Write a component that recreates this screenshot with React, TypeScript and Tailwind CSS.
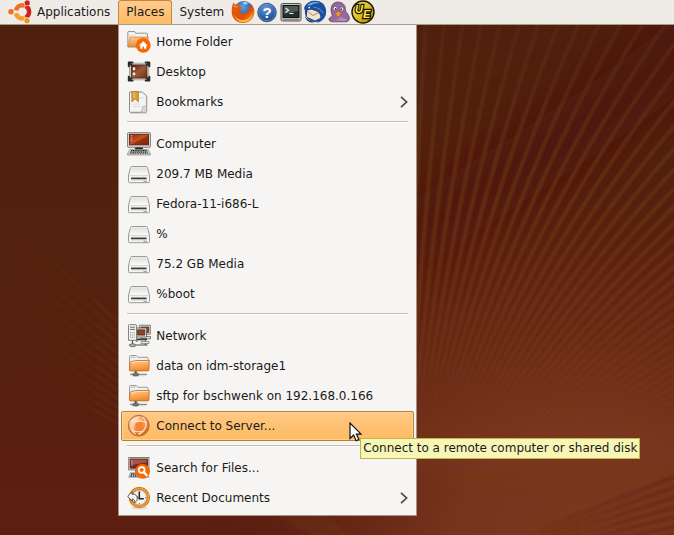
import type { ReactNode } from "react";
import clsx from "clsx";

type Entry = {
  label: string;
  icon: () => ReactNode;
  submenu?: boolean;
  active?: boolean;
  tip?: string;
};

function Defs() {
  return (
    <svg className="absolute h-0 w-0" aria-hidden="true">
      <defs>
        <linearGradient id="folder" x1="0" y1="0" x2="0.3" y2="1">
          <stop offset="0" stopColor="#fdd5a4" />
          <stop offset="0.5" stopColor="#fbab5d" />
          <stop offset="1" stopColor="#f08b2c" />
        </linearGradient>
        <linearGradient id="screen" x1="0" y1="0" x2="1" y2="1">
          <stop offset="0" stopColor="#8a2c0c" />
          <stop offset="0.5" stopColor="#c8542a" />
          <stop offset="0.55" stopColor="#9c3410" />
          <stop offset="1" stopColor="#7a2408" />
        </linearGradient>
        <linearGradient id="desk" x1="0" y1="0" x2="1" y2="1">
          <stop offset="0" stopColor="#4b1d0b" />
          <stop offset="0.5" stopColor="#9a5a38" />
          <stop offset="1" stopColor="#6d2d12" />
        </linearGradient>
        <linearGradient id="drive" x1="0" y1="0" x2="0" y2="1">
          <stop offset="0" stopColor="#e0e0de" />
          <stop offset="1" stopColor="#fbfbfb" />
        </linearGradient>
        <radialGradient id="globe" cx="0.4" cy="0.3" r="0.75">
          <stop offset="0" stopColor="#ffd9ae" />
          <stop offset="0.5" stopColor="#f69043" />
          <stop offset="1" stopColor="#dd5a10" />
        </radialGradient>
        <radialGradient id="blueBall" cx="0.45" cy="0.3" r="0.75">
          <stop offset="0" stopColor="#6a9fdb" />
          <stop offset="0.6" stopColor="#2d62a5" />
          <stop offset="1" stopColor="#123c7c" />
        </radialGradient>
        <linearGradient id="fox" x1="0" y1="0" x2="1" y2="1">
          <stop offset="0" stopColor="#e8600c" />
          <stop offset="0.6" stopColor="#e04e0a" />
          <stop offset="1" stopColor="#fbb526" />
        </linearGradient>
        <linearGradient id="gold" x1="0" y1="0" x2="1" y2="1">
          <stop offset="0" stopColor="#fff27a" />
          <stop offset="0.5" stopColor="#e2bb1c" />
          <stop offset="1" stopColor="#a37b05" />
        </linearGradient>
      </defs>
    </svg>
  );
}

function Icon({ children }: { children: ReactNode }) {
  return (
    <svg className="size-6 shrink-0" viewBox="0 0 24 24" fill="none" aria-hidden="true">
      {children}
    </svg>
  );
}

const UbuntuIcon = () => (
  <svg className="h-6 w-[25px] shrink-0" viewBox="0 0 25 24" fill="none" aria-hidden="true">
    <g strokeWidth="4.4">
      <path d="M8 10.400A6.600 6.600 0 0 1 17.200 5.800" stroke="#f0702a" />
      <path d="M17.700 6A6.600 6.600 0 0 1 17.700 17.600" stroke="#cf2118" />
      <path d="M17.200 17.900A6.600 6.600 0 0 1 8 13.200" stroke="#f5a01e" />
    </g>
    <circle cx="3" cy="11.800" r="2.700" fill="#f0701f" />
    <circle cx="19.200" cy="3" r="3.300" fill="#efebe7" />
    <circle cx="19.200" cy="2.900" r="2.600" fill="#d02318" />
    <circle cx="19" cy="20.600" r="3.300" fill="#efebe7" />
    <circle cx="19" cy="20.700" r="2.600" fill="#f0921a" />
  </svg>
);

const FirefoxIcon = () => (
  <Icon>
    <circle cx="12.600" cy="11" r="10" fill="url(#blueBall)" />
    <path d="M12 2.400c2-.8 4-.3 5 .8-1 1.600-3.400 1.400-5 .6Z" fill="#9cd0f5" />
    <path d="M1.600 4.400c.3-.8.8-1.400 1.200-1.800.2 1 .7 1.700 1.400 2.200C5.600 3.800 7.400 3.400 9 3.800 7.700 4.600 7.300 5.600 7.500 6.600c1.300.2 2.500.4 3.700.8-.4 1.300-1.600 1.800-2.800 2.300.4.9.2 1.700-.1 2.300 1.800 1.900 4.800 2 7 .6 2.300-1.200 3.600-3.600 2.800-6.400 1 .7 1.600 1.600 1.900 2.600.2-2.300-.4-4-1.400-5.800 3.400 2.200 5 5.400 4.800 9.200-.4 6.200-5 10.800-11.200 10.800C5.600 23 .9 18.200.7 12.200c0-2.800.1-5.400.9-7.800Z" fill="url(#fox)" />
    <path d="M3 14c1.400 4.200 5 6.400 9.200 6.200 4.800-.2 8.300-3.400 9.200-8-.2 5.800-4.200 9.800-9.400 9.800-4.600 0-8-3.200-9-8Z" fill="#fdc53a" />
    <path d="M2.600 6c1 1 2.600.8 4.200.6" stroke="#fbb03a" strokeWidth="1" />
  </Icon>
);

const HelpIcon = () => (
  <Icon>
    <circle cx="12" cy="12.500" r="9.300" fill="url(#blueBall)" stroke="#1d4a86" strokeWidth=".8" />
    <circle cx="12" cy="12.500" r="8.200" stroke="#6f9bd0" strokeWidth=".7" />
    <text x="12" y="18" textAnchor="middle" fill="#fff" fontSize="15" fontWeight="700" fontFamily="Liberation Sans, sans-serif">?</text>
  </Icon>
);

const TerminalIcon = () => (
  <Icon>
    <rect x="2" y="3.500" width="20" height="17.500" rx="1.500" fill="#c3c4be" stroke="#55574f" />
    <rect x="4" y="5.500" width="16" height="12" fill="#24302e" stroke="#111" />
    <path d="M5 6h14v5L5 14Z" fill="#4d5a57" />
    <path d="m6.500 8 3 2.200-3 2.200M10.500 13.500h4" stroke="#f2f5f0" strokeWidth="1.200" />
    <path d="M4 19.300h16" stroke="#7b7d77" />
  </Icon>
);

const ThunderbirdIcon = () => (
  <Icon>
    <circle cx="12.500" cy="11.500" r="10.600" fill="#1c4286" />
    <path d="M4 10.500c3-1.200 6-.9 9.500 1l3.500-.5 1.500 6.500-6.500 3L4 17Z" fill="#f1e4cf" />
    <path d="m4 11 6 4.500 6.500-3.500" stroke="#a98b62" strokeWidth="1" />
    <path d="M1.200 7.500C4 1.800 9 .2 14.200 1c6 1 9 5.600 8.800 11.200-.3 5.600-4.400 10-9.800 10.600 4-2.300 5-5.600 3.400-8.600C15 11.300 11.500 9 7.500 8.800c-2.200 0-4.400.2-6.300 1.200Z" fill="#1f4f9b" />
    <path d="M4 5.500C7.500 1.500 13 1.200 17 3.500c-4-.4-7 .1-9.500 2.100Z" fill="#6aa9e8" />
    <path d="M10 7c4 0 8.500 2.500 10 6" stroke="#4d86cc" strokeWidth="1.200" />
    <path d="M2 15.500C4 20 8 22 13 21.600c-4.500 2.400-10.500.2-11-6.100Z" fill="#16386f" />
    <circle cx="6.200" cy="7.600" r=".9" fill="#fff" />
  </Icon>
);

const PidginIcon = () => (
  <Icon>
    <path d="M4.500 13C2.800 6.500 6 2 10.800 2c5 0 7.800 3.500 7.600 7.600 0 3 3.600 4.300 4 8.400.2 2-1.400 3.800-3.400 3.800H5.500c-2.200 0-3.700-1.300-3.500-2.800.2-1.600 1.800-2 3.400-2.600 0-1-.5-2-.9-3.400Z" fill="#96699d" stroke="#66406f" strokeWidth=".8" />
    <path d="M7 20.500c3-.5 5.500-2 7-4 1.500 2 4 2.800 6.500 2.400-.6 1.600-2 2-3.600 2Z" fill="#b58bbb" />
    <circle cx="8.300" cy="8.600" r="2.100" fill="#fff" stroke="#5c3566" strokeWidth=".6" />
    <circle cx="14.700" cy="9" r="2.100" fill="#fff" stroke="#5c3566" strokeWidth=".6" />
    <circle cx="8.700" cy="8.900" r=".9" fill="#222" />
    <circle cx="14.300" cy="9.200" r=".9" fill="#222" />
    <path d="M8.800 12.500c1.300-1 3.800-.9 5.200.3-.6 1.600-1.500 3.400-3 4.400-1.400-1-2.200-3-2.200-4.700Z" fill="#f29c38" stroke="#b35e0b" strokeWidth=".6" />
  </Icon>
);

const UltraEditIcon = () => (
  <Icon>
    <circle cx="12" cy="12" r="11" fill="url(#gold)" stroke="#1b1904" strokeWidth="1.400" />
    <text x="4" y="13" fill="#ffe645" stroke="#141204" strokeWidth="2.400" paintOrder="stroke" fontSize="11" fontWeight="700" fontStyle="italic" fontFamily="Liberation Sans, sans-serif">
      U<tspan dy="5">E</tspan>
    </text>
  </Icon>
);

const HomeIcon = () => (
  <Icon>
    <path d="M.8 17V2.300c0-.5.300-.8.800-.8h6l1.200 1.700h10.800c.6 0 .9.400.9.900V17Z" fill="#e9e8e4" stroke="#8d8f8a" strokeWidth=".9" />
    <path d="M2.500 3.500h4.500M9 5h10" stroke="#fff" />
    <path d="M3 7.200h18.300L20 16.600H1.200Z" fill="url(#folder)" stroke="#c67a34" strokeWidth=".7" />
    <circle cx="16.300" cy="15.300" r="7.400" fill="#f66a06" />
    <path d="m16.300 11.200-4.300 4.200h1.300v3.400h2.200v-2.200h1.600v2.200h2.200v-3.400h1.300Z" fill="#fff" />
  </Icon>
);

const DesktopIcon = () => (
  <Icon>
    <rect x="2.500" y="3.200" width="19.200" height="16.600" fill="#eeeeec" stroke="#a5a59f" />
    <rect x="4.200" y="4.900" width="15.800" height="13.200" fill="url(#desk)" stroke="#4a2312" strokeWidth=".8" />
    <path d="M5.800 7.300h2.400v3H5.800ZM5.800 12.500h2.400v2.800H5.800Z" fill="#f4ece6" />
    <path d="M1.800 6.200V2.500h3.700M18.700 2.500h3.600v3.700M1.800 16.800v3.700h3.700M18.700 20.500h3.600v-3.700" stroke="#262826" strokeWidth="2" strokeLinejoin="round" strokeLinecap="round" />
    <path d="m2 2.700 2.800 2.800M22.200 2.700l-2.800 2.800M2 20.300l2.800-2.800M22.200 20.300l-2.800-2.800" stroke="#262826" strokeWidth="1.800" />
  </Icon>
);

const BookmarkIcon = () => (
  <Icon>
    <path d="M3.500 23h16" stroke="#cfcfcb" strokeWidth="1.500" />
    <path d="M2.700 2h12.500l4.500 4v15.500c0 .5-.3.800-.8.800H3.300c-.5 0-.8-.3-.8-.8V2.600Z" fill="#f3f3f1" stroke="#8b8d88" />
    <path d="M19.500 16.500c-1.500-.7-3-.5-4.200.2.300 2-.3 4-1.600 5.500h5.800Z" fill="#d8d9d5" stroke="#a9aaa6" strokeWidth=".7" />
    <path d="M11.500 8h6M6 14h7M6 16.500h7" stroke="#dcdcd9" />
    <path d="M4.900 1.600h6.400v10.200L8.100 8.700l-3.200 3.100Z" fill="#d9a13a" stroke="#a87416" strokeWidth=".8" />
    <path d="M7 2v6" stroke="#f0cd85" strokeWidth="1" />
  </Icon>
);

const ComputerIcon = () => (
  <Icon>
    <rect x=".6" y=".7" width="22.800" height="14.600" rx=".8" fill="#ddddd8" stroke="#6c6e69" strokeWidth=".9" />
    <rect x="2.400" y="2.300" width="19.200" height="10.600" fill="url(#screen)" stroke="#5c1a07" strokeWidth=".8" />
    <path d="M3.700 3.800h1.500M3.700 6h1.500M3.700 8.200h1.500" stroke="#eac9b8" strokeWidth="1.100" />
    <path d="M8.500 15.500h7l1 2.200h-9Z" fill="#1e1f1c" />
    <path d="M2.800 17.500h18.400l2.300 4.500v1H.5v-1Z" fill="#d4d5d0" stroke="#888a85" strokeWidth=".7" />
    <path d="M4 18.700h16" stroke="#30322f" strokeWidth="1.200" strokeDasharray="1.300 .4" />
    <path d="M3.300 20.200h17.500" stroke="#30322f" strokeWidth="1.200" strokeDasharray="1.600 .5" />
    <path d="M2.600 21.600h18.800" stroke="#555753" strokeWidth=".9" strokeDasharray="1.800 .7" />
  </Icon>
);

const DriveIcon = () => (
  <Icon>
    <path d="M4.700 4.500h14.600c.6 0 .9.300 1.100.8l2.100 7.900v6.600c0 .6-.4.900-.9.900H2.400c-.6 0-.9-.4-.9-.9v-6.600l2.100-7.900c.2-.5.500-.8 1.100-.8Z" fill="#f5f5f4" stroke="#999b96" />
    <path d="M4.900 5.600h14.200l2 7.600H2.900Z" fill="url(#drive)" />
    <path d="M2.200 13.700h19.600" stroke="#d2d3d0" />
    <path d="M4 16.400h15.600" stroke="#3a3c39" strokeWidth="1.700" />
    <path d="M4 17.800h15.600" stroke="#bdbeba" />
    <path d="M16.500 19.300h3.500" stroke="#9a9c97" strokeWidth="1" />
  </Icon>
);

const NetworkIcon = () => (
  <Icon>
    <path d="M12.300 1.200h11v9h-11Z" fill="#deded9" stroke="#70726d" strokeWidth=".9" />
    <path d="M14 3h7.700v5.500H14Z" fill="#8c4526" stroke="#4d210f" strokeWidth=".7" />
    <path d="M14 12.500h9.500v2.300H14Z" fill="#deded9" stroke="#555753" strokeWidth=".7" />
    <path d="M8.800 4h10.700v9H8.800Z" fill="#e6e6e2" stroke="#62645f" strokeWidth=".9" />
    <path d="M10.400 5.800h7.400v5.300h-7.400Z" fill="#8c4526" stroke="#4d210f" strokeWidth=".7" />
    <path d="M8 14.500h12v1.800H8Z" fill="#333" />
    <path d="M1.500 1.500c0-.5.300-.9.900-.9h6.200c.5 0 .9.400.9.900v14.800h-8Z" fill="#f1f1ee" stroke="#747671" strokeWidth=".9" />
    <path d="M3 3.200h5M3 5.400h5" stroke="#5c5e59" strokeWidth=".9" />
    <path d="M3 8.800h5M3 11h5M3 13.200h5" stroke="#8c8e88" strokeWidth="1" strokeDasharray="1 .8" />
    <path d="M8.800 17h2" stroke="#53a51b" strokeWidth="1.600" />
    <path d="M5.500 16.500v4M2 21h18.500M18.500 20.500v-4" stroke="#4b4d49" strokeWidth="1.200" />
    <path d="M14 17.500h8v2h-8Z" fill="#e9e9e6" stroke="#777974" strokeWidth=".7" />
    <ellipse cx="5.700" cy="21.300" rx="3.300" ry="1.500" fill="#a9aba6" stroke="#5b5d58" strokeWidth=".7" />
  </Icon>
);

const RemoteFolderIcon = () => (
  <Icon>
    <path d="M2.600 15V2.300c0-.5.300-.8.800-.8h6l1.400 1.800h9.400c.5 0 .9.300.9.800V15Z" fill="#f1f0ed" stroke="#91938e" strokeWidth=".9" />
    <path d="M4 3.200h4.500" stroke="#a9aba6" strokeWidth=".9" />
    <path d="M4.500 7.500 9 6.500h13.300l-.4 9.600c0 .5-.4.800-.9.800H3.200c-.5 0-.8-.3-.8-.8l.5-7.800Z" fill="url(#folder)" stroke="#b9692a" strokeWidth=".8" />
    <path d="M4.300 8.800 9.300 7.500h11.900" stroke="#ffe2bd" strokeWidth=".8" />
    <path d="M8.700 17v2.300" stroke="#555753" strokeWidth="2" />
    <path d="M3 20.400h17" stroke="#8b8d88" strokeWidth="1.200" />
    <path d="M4 21.800h15" stroke="#d0d0cc" strokeWidth=".9" />
    <ellipse cx="8.700" cy="20.500" rx="3.100" ry="1.600" fill="#73756f" stroke="#4a4c48" strokeWidth=".6" />
  </Icon>
);

const ConnectIcon = () => (
  <Icon>
    <circle cx="11.800" cy="11.700" r="10.400" fill="url(#globe)" stroke="#a8714a" />
    <path d="M2.500 8C5 4 9 2.200 13.500 2.600 11 5 8 7.500 7 10.500 6 14 7.500 18 9.500 20.800 5 20 1.500 14 2.500 8Z" fill="#fce0c4" opacity=".75" />
    <path d="M8.500 9.500c2-1.400 5-1.800 8-1l-1.200 5.300-4.300 3c-1.700-2-2.700-4.600-2.500-7.300Z" fill="#f58434" />
    <path d="M15.500 3c2.500 2 3.800 5.500 3.300 9.500-1.200 3.500-4 6.300-7.300 8" stroke="#fbd6b2" strokeWidth="1.600" />
    <path d="M3.500 7c4.500-.5 10-.5 16.500 1.500M4 15.500c3 2.200 7 2.700 11.500 2" stroke="#fdebd8" strokeWidth="1" />
  </Icon>
);

const SearchIcon = () => (
  <Icon>
    <rect x="1.700" y="1.500" width="20.300" height="12.400" fill="#dcdcd7" stroke="#73756f" strokeWidth=".9" />
    <path d="M3.200 3h17.300v9.200H3.200Z" fill="#7c2c22" stroke="#471711" strokeWidth=".8" />
    <path d="M3.800 3.600h16v2.900l-16 2.600Z" fill="#a6544a" />
    <path d="M4.500 5h1.200M4.500 7h1.200M4.500 9h1.200" stroke="#e3bfb7" />
    <path d="M8 14.300h6v2H8Z" fill="#2b2c29" />
    <path d="M3.500 16.800H20l2.200 4.400H1.700Z" fill="#d0d1cc" stroke="#888a85" strokeWidth=".7" />
    <path d="M4 18h8M3.500 20h9" stroke="#343633" strokeWidth="1.300" strokeDasharray="1.500 .7" />
    <circle cx="15.600" cy="15.300" r="7.400" fill="#f66a06" />
    <circle cx="14.700" cy="14" r="2.900" stroke="#fff" strokeWidth="1.700" />
    <path d="m16.800 16.200 2.900 3" stroke="#fff" strokeWidth="2.300" strokeLinecap="round" />
  </Icon>
);

const RecentIcon = () => (
  <Icon>
    <ellipse cx="12.500" cy="22" rx="8" ry="1.300" fill="#d9d8d5" />
    <circle cx="12.400" cy="11.500" r="9" fill="#f2f2f0" stroke="#b5640b" strokeWidth="3.200" />
    <circle cx="12.400" cy="11.500" r="9" stroke="#f2982c" strokeWidth="2.200" />
    <circle cx="12.400" cy="11.500" r="7.200" stroke="#a8aaa5" strokeWidth=".7" />
    <path d="M12.300 5.500v7.200h4.500" stroke="#242624" strokeWidth="1.500" />
    <path d="M12.300 12.700 9.500 10M12.400 17.200v.8M18 11.500h.8" stroke="#555753" />
    <path d="M.7 10.200 5 5.800v2.600c3.500-.8 5.700 1.600 5.200 4.800-.3 1.800-1.500 3-3 3.500 1-1.800.2-3.800-2.200-3.600v2.400Z" fill="#f6f6f4" stroke="#454744" strokeWidth=".9" strokeLinejoin="round" />
  </Icon>
);

const launchers = [
  { name: "Firefox Web Browser", icon: FirefoxIcon },
  { name: "Help", icon: HelpIcon },
  { name: "Terminal", icon: TerminalIcon },
  { name: "Thunderbird Mail", icon: ThunderbirdIcon },
  { name: "Pidgin", icon: PidginIcon },
  { name: "UltraEdit", icon: UltraEditIcon },
];

const places: Entry[][] = [
  [
    { label: "Home Folder", icon: HomeIcon },
    { label: "Desktop", icon: DesktopIcon },
    { label: "Bookmarks", icon: BookmarkIcon, submenu: true },
  ],
  [
    { label: "Computer", icon: ComputerIcon },
    { label: "209.7 MB Media", icon: DriveIcon },
    { label: "Fedora-11-i686-L", icon: DriveIcon },
    { label: "%", icon: DriveIcon },
    { label: "75.2 GB Media", icon: DriveIcon },
    { label: "%boot", icon: DriveIcon },
  ],
  [
    { label: "Network", icon: NetworkIcon },
    { label: "data on idm-storage1", icon: RemoteFolderIcon },
    { label: "sftp for bschwenk on 192.168.0.166", icon: RemoteFolderIcon },
    {
      label: "Connect to Server...",
      icon: ConnectIcon,
      active: true,
      tip: "Connect to a remote computer or shared disk",
    },
  ],
  [
    { label: "Search for Files...", icon: SearchIcon },
    { label: "Recent Documents", icon: RecentIcon, submenu: true },
  ],
];

// Rays fan out from one point below the menu and lean over as they get longer.
function ray(start: number, bend: number, from = 60) {
  const points: string[] = [];
  for (let r = from; r <= 700; r += 20) {
    const a = ((start + (bend * r) / 620) * Math.PI) / 180;
    points.push(`${(400 + r * Math.sin(a)).toFixed(1)} ${(585 - r * Math.cos(a)).toFixed(1)}`);
  }
  return `M${points.join("L")}`;
}

const rightRays = Array.from({ length: 54 }, (_, i) => {
  const start = 0.5 + i * 1.25;
  return ray(start, 14 * Math.sin((start * Math.PI) / 80));
});
const leftRays = Array.from({ length: 12 }, (_, i) => ray(-47 - i * 1.2, 0));
const lowRays = Array.from({ length: 7 }, (_, i) => ray(68.5 + i * 1.9, 0, 150));

function Wallpaper() {
  return (
    <svg className="absolute inset-0 h-full w-full" viewBox="0 0 674 535" preserveAspectRatio="xMidYMid slice" aria-hidden="true">
      <defs>
        <linearGradient id="base" x1="0" y1="0" x2="0" y2="1">
          <stop offset="0" stopColor="#4f200d" />
          <stop offset="0.5" stopColor="#54220e" />
          <stop offset="0.8" stopColor="#581f0f" />
          <stop offset="1" stopColor="#5e1f12" />
        </linearGradient>
        <radialGradient id="glow" gradientUnits="userSpaceOnUse" cx="590" cy="560" r="400">
          <stop offset="0" stopColor="#7c391f" />
          <stop offset="0.35" stopColor="#76341d" />
          <stop offset="0.7" stopColor="#662514" stopOpacity="0.7" />
          <stop offset="1" stopColor="#54190c" stopOpacity="0" />
        </radialGradient>
        <linearGradient id="rayFade" gradientUnits="userSpaceOnUse" x1="0" y1="25" x2="0" y2="535">
          <stop offset="0" stopColor="#5c2d10" stopOpacity="0.5" />
          <stop offset="0.35" stopColor="#6a3412" stopOpacity="0.75" />
          <stop offset="0.6" stopColor="#76361a" stopOpacity="0.55" />
          <stop offset="0.8" stopColor="#7e3a1d" stopOpacity="0.35" />
          <stop offset="0.92" stopColor="#84401f" stopOpacity="0" />
        </linearGradient>
        <linearGradient id="leftFade" gradientUnits="userSpaceOnUse" x1="10" y1="0" x2="118" y2="0">
          <stop offset="0" stopColor="#6a3214" stopOpacity="0" />
          <stop offset="1" stopColor="#6a3214" stopOpacity="0.25" />
        </linearGradient>
        <linearGradient id="lowFade" gradientUnits="userSpaceOnUse" x1="540" y1="0" x2="660" y2="0">
          <stop offset="0" stopColor="#652411" stopOpacity="0.2" />
          <stop offset="1" stopColor="#652411" stopOpacity="0.65" />
        </linearGradient>
        <filter id="haze" filterUnits="userSpaceOnUse" x="250" y="-100" width="600" height="700">
          <feGaussianBlur stdDeviation="26" />
        </filter>
        <filter id="soften" filterUnits="userSpaceOnUse" x="0" y="0" width="674" height="535">
          <feGaussianBlur stdDeviation="1" />
        </filter>
      </defs>
      <rect width="674" height="535" fill="url(#base)" />
      <path d="M400 250C470 190 570 150 720 20" stroke="#4d1109" strokeWidth="60" fill="none" opacity="0.65" filter="url(#haze)" />
      <rect width="674" height="535" fill="url(#glow)" />
      <g fill="none" strokeWidth="4" filter="url(#soften)">
        {rightRays.map((d) => (
          <path key={d} d={d} stroke="url(#rayFade)" />
        ))}
        {leftRays.map((d) => (
          <path key={d} d={d} stroke="url(#leftFade)" />
        ))}
        {lowRays.map((d) => (
          <path key={d} d={d} stroke="url(#lowFade)" />
        ))}
      </g>
    </svg>
  );
}

function MenuItem({ label, icon: Glyph, submenu, active, tip }: Entry) {
  return (
    <li role="none" className="relative">
      <button
        type="button"
        role="menuitem"
        aria-haspopup={submenu ? "menu" : undefined}
        aria-describedby={tip ? "place-tip" : undefined}
        className={clsx(
          "flex h-[30px] w-full items-center gap-[5px] rounded-[2px] border px-[5px] text-left",
          active
            ? "border-[#b9812f] bg-linear-to-b from-[#ffc884] to-[#fdbb62] shadow-[inset_0_0_0_1px_#ffd196]"
            : "border-transparent",
        )}
      >
        <Glyph />
        <span className="grow whitespace-nowrap">{label}</span>
        {submenu && (
          <svg className="h-3 w-2" viewBox="0 0 8 12" fill="none" aria-hidden="true">
            <path d="m1 .8 5.600 5.200L1 11.200" stroke="#4a4a48" strokeWidth="1.700" />
          </svg>
        )}
      </button>
      {tip && (
        <>
          <svg className="absolute top-[11px] left-[228px] z-10 h-5 w-[13px]" viewBox="0 0 13 20" aria-hidden="true">
            <path d="M1 1v15.500l3.600-3.400 2.500 5.600 2.800-1.200-2.500-5.400h4.700Z" fill="#fff" stroke="#111" strokeWidth="1.200" />
          </svg>
          <div
            id="place-tip"
            role="tooltip"
            className="absolute top-[27px] left-[239px] z-20 border border-[#bfb845] bg-[#f7f6b7] px-[2px] leading-[19px] whitespace-nowrap"
          >
            {tip}
          </div>
        </>
      )}
    </li>
  );
}

function PlacesMenu() {
  return (
    <div role="menu" aria-label="Places" className="absolute top-full left-0 z-10 w-[299px] border border-t-0 border-[#a09384] bg-[#f6f5f3] p-[2px]">
      {places.map((group, i) => (
        <div key={group[0].label}>
          {i > 0 && (
            <div role="separator" className="mx-[6px] h-3 pt-1">
              <div className="h-[2px] border-t border-[#c5bcb2] bg-white" />
            </div>
          )}
          <ul role="none">
            {group.map((entry) => (
              <MenuItem key={entry.label} {...entry} />
            ))}
          </ul>
        </div>
      ))}
    </div>
  );
}

export default function App() {
  return (
    <div className="relative min-h-screen overflow-hidden bg-[#54210e] font-['DejaVu_Sans',sans-serif] text-[12px] text-[#1a1a1a]">
      <Defs />
      <Wallpaper />
      <header className="relative flex h-[25px] items-stretch border-b border-[#a99a8b] bg-[#efebe7]">
        <nav className="flex" aria-label="Main menu">
          <button type="button" className="flex items-center gap-1 px-2">
            <UbuntuIcon />
            Applications
          </button>
          <div className="relative -mb-px pb-px">
            <button
              type="button"
              aria-haspopup="menu"
              aria-expanded="true"
              className="h-full rounded-t-[3px] border border-b-0 border-[#c08a45] bg-linear-to-b from-[#ffcb8c] to-[#fdbc66] px-[7px] pb-px"
            >
              Places
            </button>
            <PlacesMenu />
          </div>
          <button type="button" className="px-[7px]">
            System
          </button>
        </nav>
        <div className="flex">
          {launchers.map(({ name, icon: Glyph }) => (
            <button key={name} type="button" aria-label={name}>
              <Glyph />
            </button>
          ))}
        </div>
      </header>
    </div>
  );
}
